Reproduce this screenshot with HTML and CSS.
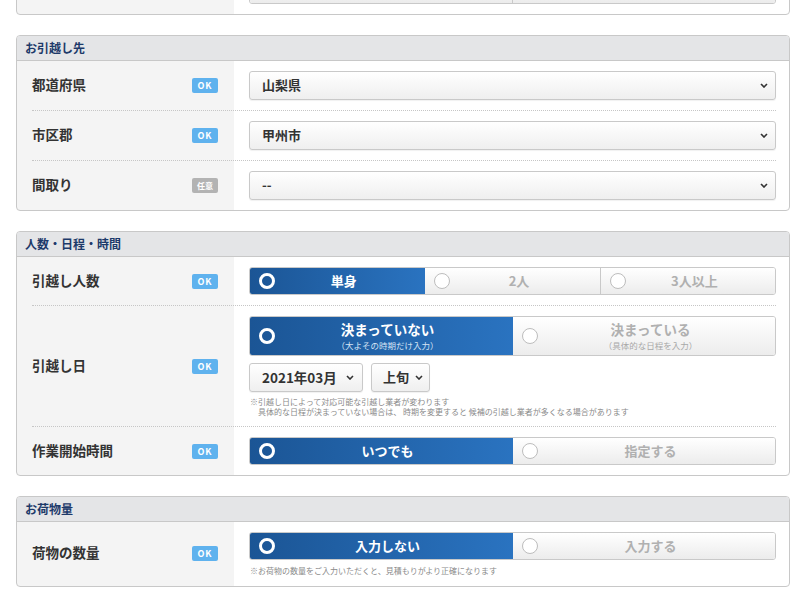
FILE: index.html
```html
<!DOCTYPE html>
<html lang="ja">
<head>
<meta charset="utf-8">
<title>引越し見積もり</title>
<link rel="stylesheet" href="styles.css">
</head>
<body>
<div class="page">
  <section class="panel panel-cut">
    <div class="row">
      <div class="label-col"></div>
      <div class="field">
        <div class="choice">
          <div class="opt"><span class="opt-text"></span></div>
          <div class="opt"><span class="opt-text"></span></div>
        </div>
      </div>
    </div>
  </section>

  <section class="panel">
    <h2 class="panel-head">お引越し先</h2>
    <div class="row row-sel">
      <div class="label-col"><span class="label">都道府県</span><span class="badge">OK</span></div>
      <div class="field">
        <div class="select select-full"><span class="sel-text">山梨県</span><svg class="chev" width="8" height="5" viewBox="0 0 8 5"><path d="M1 1l3 3 3-3" fill="none" stroke="#333" stroke-width="1.6"/></svg></div>
      </div>
    </div>
    <div class="row row-sel">
      <div class="label-col"><span class="label">市区郡</span><span class="badge">OK</span></div>
      <div class="field">
        <div class="select select-full"><span class="sel-text">甲州市</span><svg class="chev" width="8" height="5" viewBox="0 0 8 5"><path d="M1 1l3 3 3-3" fill="none" stroke="#333" stroke-width="1.6"/></svg></div>
      </div>
    </div>
    <div class="row row-sel">
      <div class="label-col"><span class="label">間取り</span><span class="badge badge-opt">任意</span></div>
      <div class="field">
        <div class="select select-full"><span class="sel-text">--</span><svg class="chev" width="8" height="5" viewBox="0 0 8 5"><path d="M1 1l3 3 3-3" fill="none" stroke="#333" stroke-width="1.6"/></svg></div>
      </div>
    </div>
  </section>

  <section class="panel">
    <h2 class="panel-head">人数・日程・時間</h2>
    <div class="row">
      <div class="label-col"><span class="label">引越し人数</span><span class="badge">OK</span></div>
      <div class="field">
        <div class="choice">
          <div class="opt opt-on"><span class="radio"></span><span class="opt-text">単身</span></div>
          <div class="opt"><span class="radio"></span><span class="opt-text">2人</span></div>
          <div class="opt"><span class="radio"></span><span class="opt-text">3人以上</span></div>
        </div>
      </div>
    </div>
    <div class="row">
      <div class="label-col"><span class="label">引越し日</span><span class="badge">OK</span></div>
      <div class="field">
        <div class="choice choice-tall">
          <div class="opt opt-on"><span class="radio"></span><span class="opt-stack"><span class="opt-main">決まっていない</span><small class="opt-sub">（大よその時期だけ入力）</small></span></div>
          <div class="opt"><span class="radio"></span><span class="opt-stack"><span class="opt-main">決まっている</span><small class="opt-sub">（具体的な日程を入力）</small></span></div>
        </div>
        <div class="date-selects">
          <div class="select select-month"><span class="sel-text">2021年03月</span><svg class="chev" width="8" height="5" viewBox="0 0 8 5"><path d="M1 1l3 3 3-3" fill="none" stroke="#333" stroke-width="1.6"/></svg></div>
          <div class="select select-term"><span class="sel-text">上旬</span><svg class="chev" width="8" height="5" viewBox="0 0 8 5"><path d="M1 1l3 3 3-3" fill="none" stroke="#333" stroke-width="1.6"/></svg></div>
        </div>
        <p class="note">※引越し日によって対応可能な引越し業者が変わります<br>　具体的な日程が決まっていない場合は、 時期を変更すると 候補の引越し業者が多くなる場合があります</p>
      </div>
    </div>
    <div class="row">
      <div class="label-col"><span class="label">作業開始時間</span><span class="badge">OK</span></div>
      <div class="field">
        <div class="choice">
          <div class="opt opt-on"><span class="radio"></span><span class="opt-text">いつでも</span></div>
          <div class="opt"><span class="radio"></span><span class="opt-text">指定する</span></div>
        </div>
      </div>
    </div>
  </section>

  <section class="panel">
    <h2 class="panel-head">お荷物量</h2>
    <div class="row">
      <div class="label-col"><span class="label">荷物の数量</span><span class="badge">OK</span></div>
      <div class="field">
        <div class="choice">
          <div class="opt opt-on"><span class="radio"></span><span class="opt-text">入力しない</span></div>
          <div class="opt"><span class="radio"></span><span class="opt-text">入力する</span></div>
        </div>
        <p class="note note-single">※お荷物の数量をご入力いただくと、見積もりがより正確になります</p>
      </div>
    </div>
  </section>
</div>
</body>
</html>
```

FILE: styles.css
```css
* { box-sizing: border-box; }

html, body {
  margin: 0;
  padding: 0;
  background: #fff;
}

body {
  font-family: "Noto Sans CJK JP", "Noto Sans", sans-serif;
  color: #333;
  overflow: hidden;
}

.page {
  padding-left: 16px;
  width: 790px;
}

.panel {
  width: 774px;
  border: 1px solid #c8c8c8;
  border-radius: 4px;
  margin-bottom: 20px;
  background: linear-gradient(to right, #f4f4f4 217px, #fff 217px);
  overflow: hidden;
}

.panel-cut {
  margin-top: -35px;
}

.panel-head {
  margin: 0;
  height: 25px;
  line-height: 24px;
  padding-left: 8px;
  font-size: 12px;
  font-weight: bold;
  color: #1d3a6a;
  background: #e4e5e7;
  border-bottom: 1px solid #c8c8c8;
}

.row {
  display: flex;
  align-items: center;
  margin: 0 13px 0 15px;
  padding: 10px 0;
}

.row + .row {
  border-top: 1px dotted #c6c6c6;
}

.label-col {
  width: 202px;
  flex: none;
  display: flex;
  align-items: center;
  justify-content: space-between;
  padding-right: 16px;
}

.label {
  font-size: 13.5px;
  font-weight: bold;
  line-height: 16px;
  margin-top: -3px;
  color: #333;
}

.badge {
  width: 26px;
  height: 15px;
  line-height: 15px;
  border-radius: 2px;
  background: #5fb2ee;
  color: #fff;
  font-size: 9px;
  font-weight: bold;
  letter-spacing: 1px;
  text-align: center;
}

.badge-opt {
  background: #b3b3b3;
  font-size: 8px;
  letter-spacing: 0;
}

.field {
  flex: 1;
  padding-left: 15px;
  display: flex;
  flex-direction: column;
  align-items: flex-start;
}

.select {
  height: 29px;
  display: flex;
  align-items: center;
  justify-content: space-between;
  padding: 0 7px 0 12px;
  border: 1px solid #c9c9c9;
  border-radius: 3px;
  background: linear-gradient(to bottom, #ffffff, #efefef);
  box-shadow: 0 1px 1px rgba(0,0,0,0.06);
  font-size: 13px;
  font-weight: bold;
  line-height: 16px;
  color: #333;
}

.sel-text { margin-top: -2px; }

.select-full { width: 100%; }

.chev { flex: none; }

.select-month {
  width: 114px;
  font-size: 13.5px;
  padding-right: 8px;
}

.select-term {
  width: 59px;
  font-size: 13px;
  padding: 0 6px 0 11px;
}

.date-selects {
  display: flex;
  gap: 8px;
  margin-top: 7px;
}

.choice {
  width: 100%;
  display: flex;
  border: 1px solid #c9c9c9;
  border-radius: 3px;
  overflow: hidden;
  height: 28px;
}

.choice-tall { height: 40px; }

.opt {
  flex: 1;
  display: flex;
  align-items: center;
  padding: 0 12px 0 9px;
  background: linear-gradient(to bottom, #ffffff, #ececec);
  color: #b0b0b0;
}

.opt + .opt {
  border-left: 1px solid #c9c9c9;
}

.opt-on {
  background: linear-gradient(to right, #1b5595, #2a73c0);
  color: #fff;
}

.opt-on + .opt { border-left-color: #2a73c0; }

.radio {
  flex: none;
  width: 16px;
  height: 16px;
  border-radius: 50%;
  border: 1px solid #bdbdbd;
  background: #fff;
}

.opt-on .radio {
  border: 3px solid #fff;
  background: transparent;
}

.opt-text {
  flex: 1;
  text-align: center;
  font-size: 13px;
  font-weight: bold;
  line-height: 15px;
  margin-top: -2px;
}

.opt-stack {
  flex: 1;
  display: flex;
  flex-direction: column;
  align-items: center;
  margin-top: -2px;
}

.opt-main {
  display: block;
  font-size: 13.5px;
  font-weight: bold;
  line-height: 20px;
}

.opt-sub {
  display: block;
  font-size: 8.5px;
  font-weight: normal;
  line-height: 12.5px;
  color: #a8a8a8;
}

.opt-on .opt-sub { color: #d6e4f5; }

.note {
  margin: 5px 0 0 1px;
  font-size: 8px;
  line-height: 9.5px;
  color: #8a8a8a;
}

.note-single { margin-top: 6px; }
```
